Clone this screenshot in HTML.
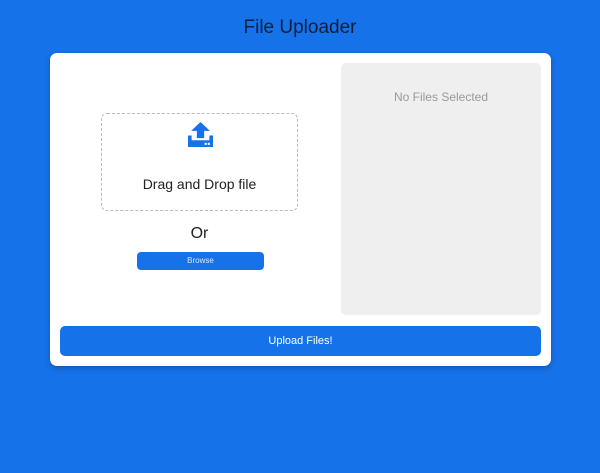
<!DOCTYPE html>
<html><head><style>
body{margin:0;width:600px;height:473px;background:#1672e9;font-family:"Liberation Sans",sans-serif;position:relative;overflow:hidden}
.t{position:absolute;top:17px;left:0;width:600px;text-align:center;font-size:19px;color:#0e1f3d}
.card{position:absolute;left:50px;top:53px;width:501px;height:313px;background:#fff;border-radius:7px;box-shadow:0 2px 6px rgba(0,0,0,.25)}
.right{position:absolute;left:291px;top:10px;width:200px;height:252px;background:#efeff0;border-radius:5px;text-align:center;color:#999;font-size:12px}
.drop{position:absolute;left:51px;top:60px;width:195px;height:96px;border:1px dashed #bbb;border-radius:6px;text-align:center}
.or{position:absolute;left:51px;top:172px;width:197px;text-align:center;font-size:16px;color:#222}
.br{position:absolute;left:87px;top:199px;width:127px;height:18px;background:#1672e9;border-radius:4px;color:#dbe8ff;font-size:8px;text-align:center;line-height:18px}
.up{position:absolute;left:10px;top:273px;width:481px;height:30px;background:#1672e9;border-radius:5px;color:#fff;font-size:11px;text-align:center;line-height:30px}
</style></head><body>
<div class="t">File Uploader</div>
<div class="card">
<div class="drop">
<svg style="position:absolute;left:86px;top:8px" width="25" height="25" viewBox="0 0 24 24"><path d="M12 0L3 8.5h5.5v7h7v-7H21z" fill="#1672e9"/><path d="M0 13h3.5v4.5h17V13H24v11H0z" fill="#1672e9"/><rect x="16" y="20" width="2" height="2" fill="#fff"/><rect x="19" y="20" width="2" height="2" fill="#fff"/></svg>
<div style="position:absolute;top:62px;width:100%;font-size:14px;color:#222">Drag and Drop file</div>
</div>
<div class="or">Or</div>
<div class="br">Browse</div>
<div class="right"><div style="margin-top:27px">No Files Selected</div></div>
<div class="up">Upload Files!</div>
</div>
</body></html>
